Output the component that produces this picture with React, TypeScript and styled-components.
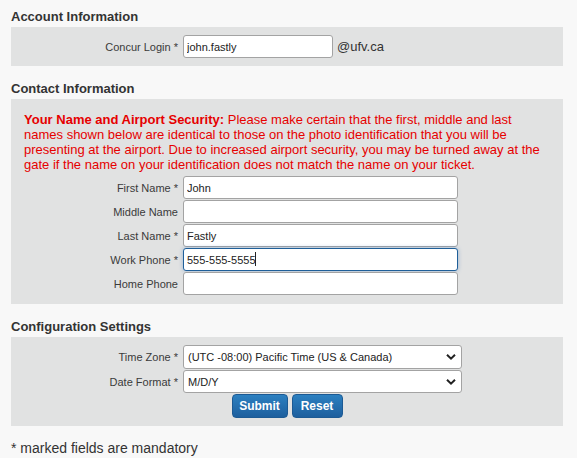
import React from 'react';
import styled, { createGlobalStyle } from 'styled-components';

const GlobalStyle = createGlobalStyle`
  html, body {
    margin: 0;
    padding: 0;
    background: #fff;
  }
  body {
    font-family: "Liberation Sans", Arial, sans-serif;
    color: #333;
  }
`;

const Page = styled.div`
  width: 577px;
  min-height: 458px;
  padding: 0 14px 0 11px;
  background: #f8f8f8;
  box-sizing: border-box;
  display: flex;
  flex-direction: column;
`;

const Section = styled.section<{ first?: boolean }>`
  display: flex;
  flex-direction: column;
  gap: 2px;
  margin-top: ${(p) => (p.first ? '9px' : '15px')};
`;

const Heading = styled.h2`
  margin: 0;
  font-size: 13px;
  line-height: 16px;
  font-weight: bold;
  color: #333;
`;

const Panel = styled.div<{ pad?: string }>`
  background: #e1e2e2;
  padding: ${(p) => p.pad || '8px 0'};
  display: flex;
  flex-direction: column;
  gap: 1px;
`;

const Row = styled.div`
  display: grid;
  grid-template-columns: 167px auto;
  column-gap: 5px;
  align-items: center;
`;

const Label = styled.label`
  text-align: right;
  font-size: 11px;
  color: #3a3a3a;
  white-space: nowrap;
`;

const Field = styled.div`
  display: flex;
  align-items: center;
  gap: 4px;
`;

const Input = styled.input<{ w: number; h?: number; focused?: boolean }>`
  box-sizing: border-box;
  width: ${(p) => p.w}px;
  height: ${(p) => p.h || 22}px;
  margin: 0;
  padding: 0 3px;
  font-family: "Liberation Sans", Arial, sans-serif;
  font-size: 11px;
  color: #222;
  background: #fff;
  border: 1px solid ${(p) => (p.focused ? '#1f5f99' : '#a3a3a3')};
  border-radius: 3px;
  box-shadow: ${(p) => (p.focused ? '0 0 4px rgba(60, 120, 190, 0.45)' : 'none')};
  outline: none;
`;

const Caret = styled.span`
  position: absolute;
  left: 72px;
  top: 4px;
  width: 1px;
  height: 14px;
  background: #222;
`;

const InputWrap = styled.div`
  position: relative;
  display: inline-flex;
`;

const Suffix = styled.span`
  font-size: 13px;
  color: #333;
`;

const Warning = styled.p`
  margin: 0 0 3px;
  padding: 0 13px;
  font-size: 13px;
  line-height: 15px;
  color: #e60000;

  strong {
    font-weight: bold;
  }
`;

const SelectWrap = styled.div`
  position: relative;
  display: inline-flex;
  width: 279px;
`;

const Select = styled.select<{ h: number }>`
  appearance: none;
  -webkit-appearance: none;
  box-sizing: border-box;
  width: 100%;
  height: ${(p) => p.h}px;
  margin: 0;
  padding: 0 20px 0 4px;
  font-family: "Liberation Sans", Arial, sans-serif;
  font-size: 11px;
  color: #222;
  background: #fff;
  border: 1px solid #a3a3a3;
  border-radius: 3px;
  outline: none;
`;

const Chevron = styled.svg`
  position: absolute;
  right: 6px;
  top: 50%;
  transform: translateY(-50%);
  pointer-events: none;
`;

const Buttons = styled.div`
  display: flex;
  justify-content: center;
  gap: 4px;
`;

const Button = styled.button<{ w: number }>`
  width: ${(p) => p.w}px;
  height: 24px;
  padding: 0;
  font-family: "Liberation Sans", Arial, sans-serif;
  font-size: 12px;
  font-weight: bold;
  color: #fff;
  background: linear-gradient(#2c80c0, #1d5f9e);
  border: 1px solid #1c5a94;
  border-radius: 4px;
  cursor: pointer;
`;

const Footnote = styled.p`
  margin: 14px 0 0;
  font-size: 14px;
  line-height: 16px;
  color: #333;
`;

const SelectBox = ({ value, h }: { value: string; h: number }) => (
  <SelectWrap>
    <Select h={h} defaultValue={value}>
      <option>{value}</option>
    </Select>
    <Chevron width="10" height="7" viewBox="0 0 10 7">
      <path d="M1 1.2 L5 5.2 L9 1.2" fill="none" stroke="#222" strokeWidth="2" />
    </Chevron>
  </SelectWrap>
);

const contactFields = [
  { label: 'First Name *', value: 'John' },
  { label: 'Middle Name', value: '' },
  { label: 'Last Name *', value: 'Fastly' },
  { label: 'Work Phone *', value: '555-555-5555', focused: true },
  { label: 'Home Phone', value: '' },
];

const App = () => (
  <>
    <GlobalStyle />
    <Page>
      <Section first>
        <Heading>Account Information</Heading>
        <Panel>
          <Row>
            <Label>Concur Login *</Label>
            <Field>
              <Input w={150} h={23} defaultValue="john.fastly" />
              <Suffix>@ufv.ca</Suffix>
            </Field>
          </Row>
        </Panel>
      </Section>

      <Section>
        <Heading>Contact Information</Heading>
        <Panel pad="13px 0 9px">
          <Warning>
            <strong>Your Name and Airport Security:</strong> Please make certain that the first, middle and last
            names shown below are identical to those on the photo identification that you will be
            presenting at the airport. Due to increased airport security, you may be turned away at the
            gate if the name on your identification does not match the name on your ticket.
          </Warning>
          {contactFields.map((f) => (
            <Row key={f.label}>
              <Label>{f.label}</Label>
              <InputWrap>
                <Input w={275} h={23} defaultValue={f.value} focused={f.focused} />
                {f.focused && <Caret />}
              </InputWrap>
            </Row>
          ))}
        </Panel>
      </Section>

      <Section>
        <Heading>Configuration Settings</Heading>
        <Panel pad="8px 0 8px">
          <Row>
            <Label>Time Zone *</Label>
            <SelectBox value="(UTC -08:00) Pacific Time (US & Canada)" h={24} />
          </Row>
          <Row>
            <Label>Date Format *</Label>
            <SelectBox value="M/D/Y" h={23} />
          </Row>
          <Buttons>
            <Button w={56}>Submit</Button>
            <Button w={51}>Reset</Button>
          </Buttons>
        </Panel>
      </Section>

      <Footnote>* marked fields are mandatory</Footnote>
    </Page>
  </>
);

export default App;
